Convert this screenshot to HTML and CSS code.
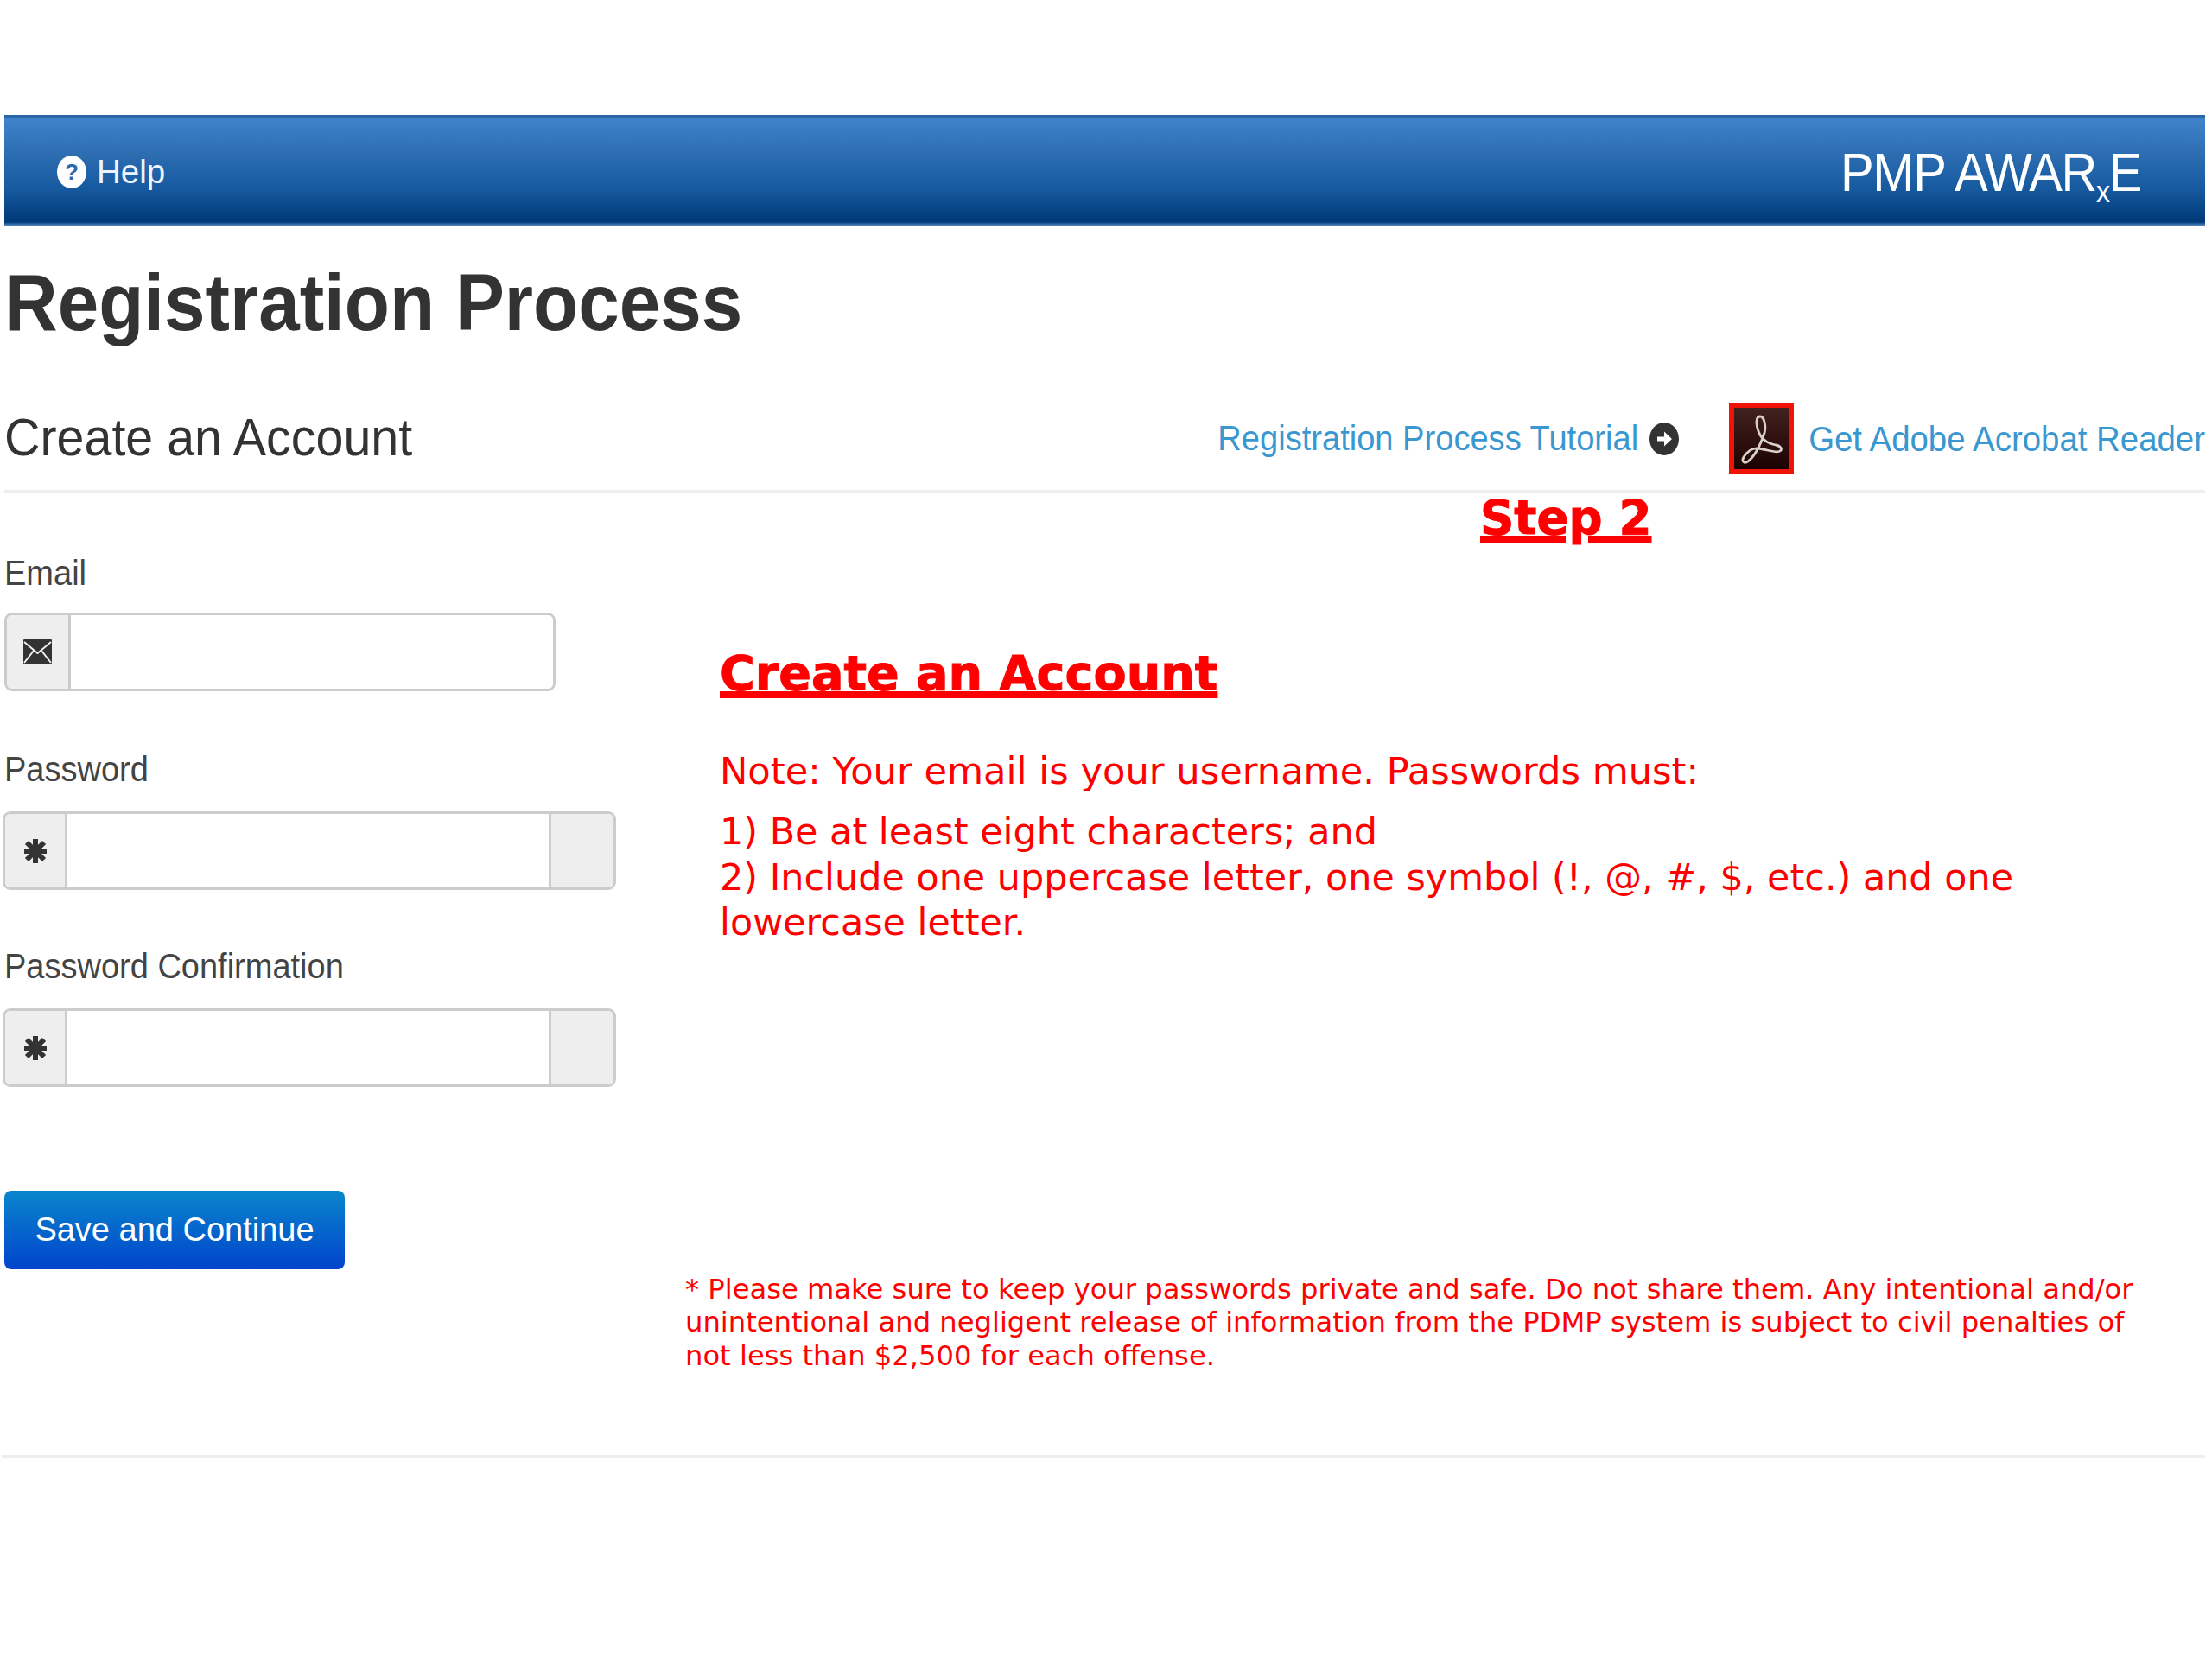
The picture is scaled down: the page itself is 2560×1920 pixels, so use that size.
FILE: index.html
```html
<!DOCTYPE html>
<html lang="en">
<head>
<meta charset="utf-8">
<title>Registration Process</title>
<link rel="stylesheet" href="styles.css">
</head>
<body>
<div class="page">
  <header class="topbar">
    <a class="help"><span class="help-icon">?</span><span>Help</span></a>
    <div class="brand">PMP AWAR<sub>x</sub>E</div>
  </header>
  <h1 class="title"><span class="tall">Registration Process</span></h1>
  <div class="subhead">
    <h2 class="subtitle"><span class="tall">Create an Account</span></h2>
    <div class="links">
      <a class="link link-tutorial"><span class="tall">Registration Process Tutorial</span></a>
      <span class="arrow-icon"><svg viewBox="0 0 34 38" width="34" height="38"><ellipse cx="17" cy="19" rx="17" ry="19" fill="#333"/><path d="M9 16.500h8v-6l9 8.500-9 8.500v-6H9z" fill="#fff"/></svg></span>
      <span class="adobe-icon"><svg viewBox="0 0 75 83" width="75" height="83"><defs><linearGradient id="ad" x1="0" y1="0" x2="0" y2="1"><stop offset="0" stop-color="#42211e"/><stop offset="1" stop-color="#1c0202"/></linearGradient></defs><rect width="75" height="83" fill="#f01406"/><rect x="6" y="6" width="63" height="71" fill="url(#ad)"/><path d="M36 16c-5 0-5 9-2 17 3 9 10 14 20 16 6 1 8 5 5 7-4 3-16-2-25-3-8-1-13 4-17 10-3 5 1 8 5 5 8-6 15-21 19-33 2-7 0-19-5-19z" fill="none" stroke="#d8cfcd" stroke-width="2.800"/></svg></span>
      <a class="link"><span class="tall">Get Adobe Acrobat Reader</span></a>
    </div>
  </div>
  <div class="content">
    <form class="form">
      <div class="field">
        <label class="label"><span class="tall">Email</span></label>
        <div class="group group-short">
          <span class="addon addon-mail"><svg viewBox="0 0 33 29" width="33" height="29"><rect width="33" height="29" rx="1" fill="#333"/><path d="M1 3l15.500 13L32 3M1 27l11-14M32 27L21 13" fill="none" stroke="#eee" stroke-width="2"/></svg></span>
          <input class="input" type="text" aria-label="Email">
        </div>
      </div>
      <div class="field">
        <label class="label"><span class="tall">Password</span></label>
        <div class="group group-wide">
          <span class="addon"><svg viewBox="0 0 28 30" width="28" height="30"><g stroke="#333" stroke-width="6"><path d="M14 1v28M1 15h26M4 5l20 20M24 5L4 25"/></g></svg></span>
          <input class="input" type="password" aria-label="Password">
          <span class="addon addon-end"></span>
        </div>
      </div>
      <div class="field">
        <label class="label"><span class="tall">Password Confirmation</span></label>
        <div class="group group-wide">
          <span class="addon"><svg viewBox="0 0 28 30" width="28" height="30"><g stroke="#333" stroke-width="6"><path d="M14 1v28M1 15h26M4 5l20 20M24 5L4 25"/></g></svg></span>
          <input class="input" type="password" aria-label="Password Confirmation">
          <span class="addon addon-end"></span>
        </div>
      </div>
      <button class="save" type="button">Save and Continue</button>
    </form>
    <section class="notes">
      <div class="step">Step 2</div>
      <div class="heading">Create an Account</div>
      <p class="note">Note: Your email is your username. Passwords must:</p>
      <p class="rules">1) Be at least eight characters; and<br>2) Include one uppercase letter, one symbol (!, @, #, $, etc.) and one lowercase letter.</p>
      <p class="fine">* Please make sure to keep your passwords private and safe. Do not share them. Any intentional and/or unintentional and negligent release of information from the PDMP system is subject to civil penalties of not less than $2,500 for each offense.</p>
    </section>
  </div>
  <hr class="end-rule">
</div>
</body>
</html>
```
FILE: styles.css
```css
html, body { margin: 0; background: #fff; }
body { font-family: "Liberation Sans", Arial, sans-serif; color: #333; }
.page { width: 2552px; padding-top: 133px; }
a { text-decoration: none; }

.topbar {
  box-sizing: border-box;
  margin-left: 5px;
  height: 129px;
  padding: 0 74px 0 61px;
  display: flex;
  align-items: center;
  justify-content: space-between;
  background: linear-gradient(#4084cd 0, #2f6fb4 30%, #175a9f 65%, #003a78 96%, #6c9fd6 100%);
  border-top: 3px solid #2a66a8;
  color: #fff;
}
.help { display: flex; align-items: center; gap: 12px; font-size: 38.500px; color: #eef4fb; }
.help-icon {
  width: 34px; height: 38px; border-radius: 50%;
  background: #fff; color: #2a69ad;
  font-size: 26px; font-weight: 700; line-height: 38px; text-align: center;
}
.brand { font-size: 58px; letter-spacing: -1.400px; line-height: 70px; transform: scaleY(1.100); }
.brand sub { font-size: 32px; line-height: 0; vertical-align: -12px; }

.tall { display: inline-block; transform: scaleY(1.080); }
.title {
  margin: 39px 0 0 5px;
  font-size: 85.400px; line-height: 100px; font-weight: 700; color: #333;
}
.subhead {
  margin: 65px 0 0 5px;
  padding-bottom: 18px;
  border-bottom: 3px solid #eee;
  display: flex; align-items: center; justify-content: space-between;
}
.subtitle { margin: 0 0 5px; font-size: 57.400px; font-weight: 400; line-height: 70px; }
.links { display: flex; align-items: center; }
.link { font-size: 38.400px; color: #3a97cf; white-space: nowrap; }
.link-tutorial { font-size: 38.100px; }
.arrow-icon { display: flex; margin: 0 0 0 13px; }
.adobe-icon { display: flex; margin: 0 17px 0 58px; }

.content { display: flex; margin-left: 5px; }
.form { width: 788px; flex: none; padding-top: 71px; }
.field { margin-bottom: 66px; }
.field:first-child { margin-bottom: 68px; }
.label { display: block; font-size: 38px; line-height: 44px; margin-bottom: 27px; color: #444; }
.field:first-child .label { margin-bottom: 24px; }
.group {
  box-sizing: border-box; display: flex; height: 91px;
  border: 3px solid #ccc; border-radius: 9px; overflow: hidden; background: #fff;
}
.group-short { width: 638px; }
.group-wide { width: 710px; margin-left: -2px; }
.addon {
  flex: none; width: 72px; box-sizing: border-box;
  display: flex; align-items: center; justify-content: center;
  background: #eee; border-right: 3px solid #ccc;
}
.addon-mail { width: 74px; }
.addon-end { width: 75px; border-right: 0; border-left: 3px solid #ccc; }
.input { flex: 1; min-width: 0; border: 0; padding: 0; background: #fff; outline: 0; }
.save {
  display: block; width: 394px; height: 91px; margin-top: 120px;
  border: 0; border-radius: 8px; padding: 0;
  background: linear-gradient(#0a86cc, #0044cc);
  color: #fff; font: 38px "Liberation Sans", Arial, sans-serif;
}

.notes { flex: 1; min-width: 0; color: #f00; font-family: "DejaVu Sans", Verdana, sans-serif; }
.step {
  margin-left: 920px;
  font-size: 54.600px; line-height: 58px; font-weight: 700;
  -webkit-text-stroke: 1px #f00;
  text-decoration: underline; text-decoration-thickness: 8px; text-underline-offset: 2px;
}
.heading {
  margin: 119px 0 0 40px;
  font-size: 55.600px; line-height: 64px; font-weight: 700;
  -webkit-text-stroke: 1px #f00;
  text-decoration: underline; text-decoration-thickness: 8px; text-underline-offset: 2px;
}
.note { margin: 55px 0 0 40px; font-size: 43.200px; line-height: 52px; }
.rules { margin: 18px 0 0 40px; width: 1540px; font-size: 42.900px; line-height: 52.500px; }
.fine { margin: 379px 0 0; width: 1690px; font-size: 32.200px; line-height: 38.500px; }

.end-rule { margin: 96px 0 0 2px; border: 0; height: 3px; background: #eee; }
```
